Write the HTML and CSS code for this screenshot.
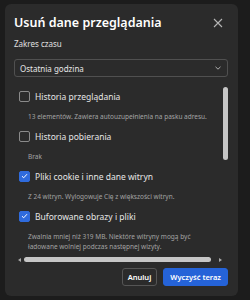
FILE: index.html
```html
<!DOCTYPE html>
<html>
<head>
  <meta charset="UTF-8">
  <title>Usuń dane przeglądania</title>
  <link rel="stylesheet" href="styles.css">
</head>
<body>
  <div class="dialog">
    <div class="head">
      <h3 class="title">Usuń dane przeglądania</h3>
      <svg class="close" width="10" height="10" viewBox="0 0 10 10">
        <path d="M1 1L9 9M9 1L1 9" stroke="#b5b5b5" stroke-width="1.1" fill="none"/>
      </svg>
    </div>

    <div class="label">Zakres czasu</div>
    <div class="select">
      <span>Ostatnia godzina</span>
      <svg width="6" height="4" viewBox="0 0 6 4">
        <path d="M0.5 0.8L3 3.2L5.5 0.8" stroke="#bdbdbd" stroke-width="0.9" fill="none"/>
      </svg>
    </div>

    <div class="scroller">
      <div class="list">
        <div class="item">
          <div class="row"><span class="box"></span>Historia przeglądania</div>
          <div class="desc">13 elementów. Zawiera autouzupełnienia na pasku adresu.</div>
        </div>
        <div class="item">
          <div class="row"><span class="box"></span>Historia pobierania</div>
          <div class="desc">Brak</div>
        </div>
        <div class="item">
          <div class="row"><span class="box checked"><svg width="7" height="6" viewBox="0 0 7 6"><path d="M1 3.2L2.7 4.8L6 1.2" stroke="#fff" stroke-width="1" fill="none"/></svg></span>Pliki cookie i inne dane witryn</div>
          <div class="desc">Z 24 witryn. Wylogowuje Cię z większości witryn.</div>
        </div>
        <div class="item">
          <div class="row"><span class="box checked"><svg width="7" height="6" viewBox="0 0 7 6"><path d="M1 3.2L2.7 4.8L6 1.2" stroke="#fff" stroke-width="1" fill="none"/></svg></span>Buforowane obrazy i pliki</div>
          <div class="desc">Zwalnia mniej niż 319 MB. Niektóre witryny mogą być<br>ładowane wolniej podczas następnej wizyty.</div>
        </div>
      </div>
      <div class="vbar"><div class="vthumb"></div></div>
      <div class="hbar">
        <span class="arrow left"></span>
        <div class="hthumb"></div>
        <span class="arrow right"></span>
      </div>
    </div>

    <div class="actions">
      <button class="button">Anuluj</button>
      <button class="button primary">Wyczyść teraz</button>
    </div>
  </div>
</body>
</html>
```

FILE: styles.css
```css
body {
  margin: 0;
  padding: 4px 12px 4px 5px;
  background-color: #1c1c1c;
  font-family: "Noto Sans", "Open Sans", sans-serif;
  color: #e6e6e6;
}
.dialog {
  width: 233px;
  height: 292px;
  box-sizing: border-box;
  padding: 10px 10px 9px 9px;
  background-color: #2b2b2b;
  border-radius: 6px;
}
.head {
  display: flex;
  justify-content: space-between;
  align-items: center;
  height: 18px;
}
.title {
  margin: 0;
  font-size: 12.5px;
  font-weight: 600;
  color: #ffffff;
  line-height: 18px;
}
.close {
  margin-right: 5px;
}
.label {
  margin-top: 6px;
  font-size: 8px;
  line-height: 12px;
  color: #e0e0e0;
}
.select {
  margin-top: 9px;
  height: 18px;
  box-sizing: border-box;
  border: 1px solid #505050;
  border-radius: 3px;
  display: flex;
  justify-content: space-between;
  align-items: center;
  padding: 0 6px 0 5px;
  font-size: 8px;
  color: #e6e6e6;
}
.scroller {
  margin-top: 9px;
  display: grid;
  grid-template-columns: 1fr 5px;
  column-gap: 4px;
}
.list {
  padding-left: 5px;
}
.item {
  margin-bottom: 4px;
}
.row {
  display: flex;
  align-items: center;
  height: 20px;
  font-size: 8.5px;
  color: #e6e6e6;
}
.box {
  width: 11px;
  height: 11px;
  box-sizing: border-box;
  border: 1px solid #8a8a8a;
  border-radius: 2px;
  margin-right: 5px;
  display: flex;
  align-items: center;
  justify-content: center;
}
.box.checked {
  background-color: #2f6bdc;
  border-color: #2f6bdc;
}
.desc {
  margin-top: 6px;
  padding-left: 9px;
  font-size: 6.5px;
  line-height: 10px;
  color: #a3a3a3;
  white-space: nowrap;
}
.vbar {
  padding-top: 1px;
}
.vthumb {
  height: 73px;
  background-color: #c6c6c6;
  border-radius: 3px;
}
.hbar {
  grid-column: 1 / 3;
  display: flex;
  align-items: center;
  height: 5px;
  margin-top: 1px;
  padding-left: 4px;
}
.hthumb {
  width: 187px;
  height: 5px;
  background-color: #c6c6c6;
  border-radius: 3px;
  margin: 0 8px 0 3px;
}
.arrow {
  width: 0;
  height: 0;
  border-top: 2.5px solid transparent;
  border-bottom: 2.5px solid transparent;
}
.arrow.left {
  border-right: 3px solid #a8a8a8;
}
.arrow.right {
  border-left: 3px solid #a8a8a8;
}
.actions {
  margin-top: 6px;
  display: flex;
  justify-content: flex-end;
  gap: 6px;
}
.button {
  height: 18px;
  padding: 0 5px;
  border: 1px solid #555555;
  border-radius: 3px;
  background-color: #2b2b2b;
  color: #ffffff;
  font-family: "Noto Sans", "Open Sans", sans-serif;
  font-size: 7.5px;
  font-weight: 600;
  cursor: pointer;
}
.button.primary {
  background-color: #2563d8;
  border-color: #2563d8;
  padding: 0 6px;
}
```
